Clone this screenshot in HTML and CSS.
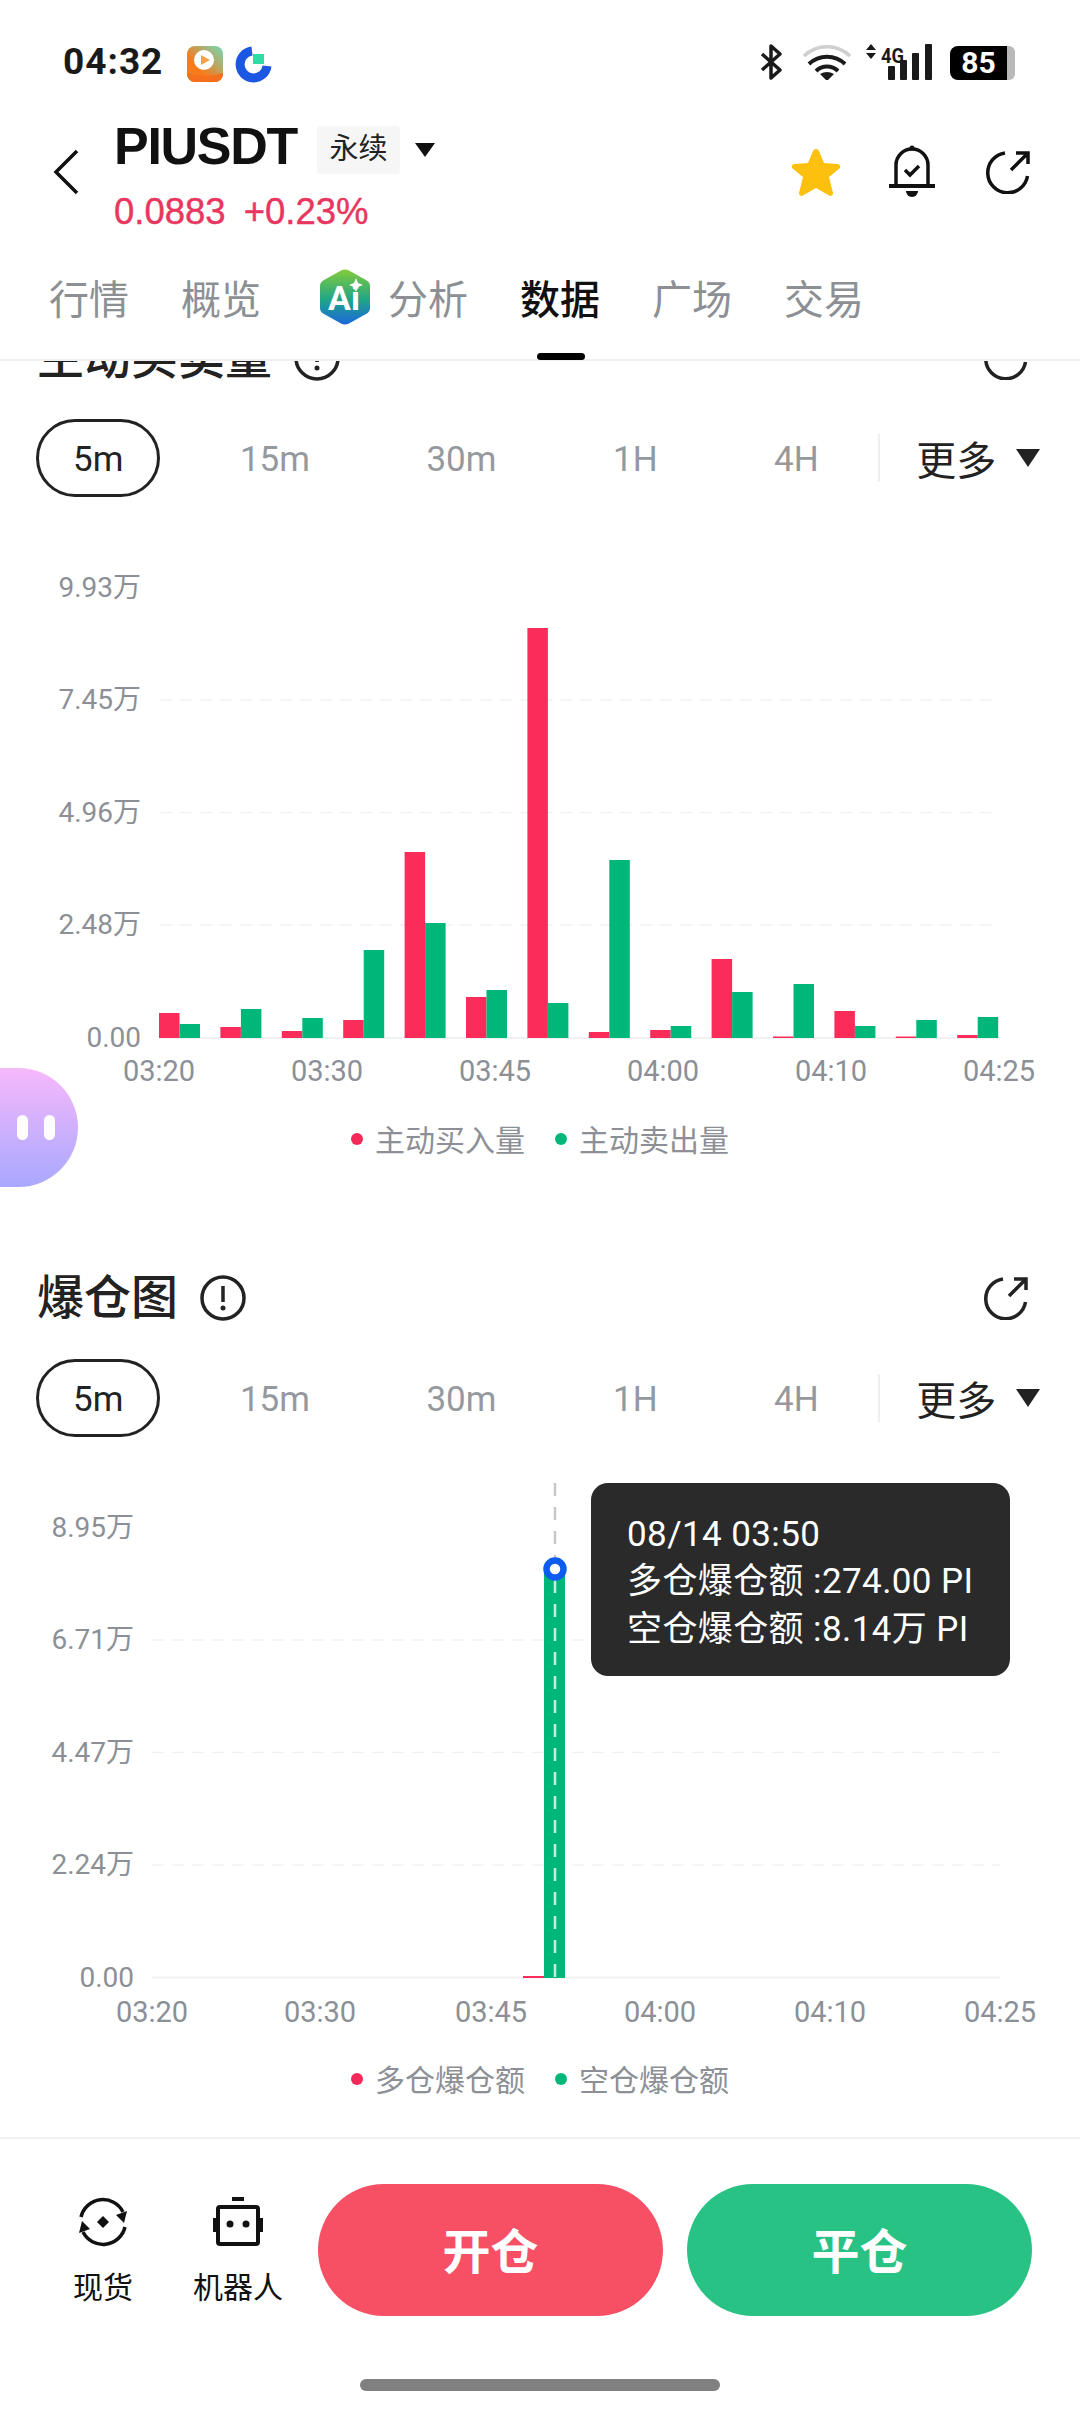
FILE: index.html
```html
<!DOCTYPE html>
<html lang="zh-CN">
<head>
    <meta charset="UTF-8">
    <meta name="viewport" content="width=device-width, initial-scale=1.0">
    <title>PIUSDT 数据</title>
    <link rel="stylesheet" href="styles.css">
</head>
<body>
    <div class="status-bar">
        <div class="status-left">
            <span class="time">04:32</span>
            <svg class="app-icon" width="36" height="36" viewBox="0 0 36 36">
                <defs>
                    <linearGradient id="appGrad" x1="0" y1="1" x2="1" y2="0">
                        <stop offset="0.35" stop-color="#f77a1c"/>
                        <stop offset="1" stop-color="#6fdcb8"/>
                    </linearGradient>
                </defs>
                <rect width="36" height="36" rx="8" fill="url(#appGrad)"/>
                <path d="M0 27 Q18 33 36 27 V28 A8 8 0 0 1 28 36 H8 A8 8 0 0 1 0 28 Z" fill="#f56f1e"/>
                <circle cx="17" cy="14" r="10" fill="#fff"/>
                <path d="M14 9 L23 14 L14 19 Z" fill="#f5a04a"/>
            </svg>
            <svg class="app-icon" width="37" height="37" viewBox="0 0 37 37">
                <path d="M17 5 A13.500 13.500 0 1 0 32 20" fill="none" stroke="#1b57e2" stroke-width="9"/>
                <rect x="18" y="8" width="11" height="10" fill="#2edca4"/>
            </svg>
        </div>
        <div class="status-right">
            <svg width="22" height="36" viewBox="0 0 22 36">
                <path d="M2 10 L20 26 L11 34 V2 L20 10 L2 26" fill="none" stroke="#1a1a1a" stroke-width="3.500" stroke-linejoin="round"/>
            </svg>
            <svg width="50" height="36" viewBox="0 0 50 36">
                <path d="M2 12 A33 33 0 0 1 48 12" fill="none" stroke="#cfcfcf" stroke-width="3.500"/>
                <path d="M7 20 A26 26 0 0 1 43 20" fill="none" stroke="#1a1a1a" stroke-width="4"/>
                <path d="M14 27 A16 16 0 0 1 36 27" fill="none" stroke="#1a1a1a" stroke-width="4"/>
                <path d="M25 37 L18 30 Q25 26 32 30 Z" fill="#1a1a1a"/>
            </svg>
            <svg width="67" height="36" viewBox="0 0 67 36">
                <path d="M0 6 L5 0 L10 6 Z M0 9 H10 L5 15 Z" fill="#1a1a1a"/>
                <text class="net-label" x="15" y="19" textLength="23" lengthAdjust="spacingAndGlyphs">4G</text>
                <rect x="22" y="22" width="7" height="14" rx="1" fill="#1a1a1a"/>
                <rect x="34" y="16" width="7" height="20" rx="1" fill="#1a1a1a"/>
                <rect x="46" y="9" width="7" height="27" rx="1" fill="#1a1a1a"/>
                <rect x="59" y="0" width="7" height="36" rx="1" fill="#1a1a1a"/>
            </svg>
            <div class="battery">
                <span class="battery-body">85</span>
                <span class="battery-tip"></span>
            </div>
        </div>
    </div>

    <header class="top">
        <div class="top-row">
            <svg class="back" width="27" height="46" viewBox="0 0 27 46">
                <path d="M25 2 L4 23 L25 44" fill="none" stroke="#111" stroke-width="3.500"/>
            </svg>
            <div class="pair">
                <div class="pair-title">
                    <span class="symbol">PIUSDT</span>
                    <span class="tag">永续</span>
                    <span class="caret"></span>
                </div>
                <div class="price">
                    <span>0.0883</span>
                    <span>+0.23%</span>
                </div>
            </div>
            <div class="top-actions">
                <svg width="50" height="49" viewBox="0 0 50 49">
                    <path d="M25 1 Q27 1 28 3 L33 15 L47 16 Q50 17 49 20 L38 29 L42 45 Q42 48 39 48 L25 40 L11 48 Q8 48 8 45 L12 29 L1 20 Q0 17 3 16 L17 15 L22 3 Q23 1 25 1 Z" fill="#fdc00f"/>
                </svg>
                <svg class="bell" width="46" height="52" viewBox="0 0 46 52">
                    <path d="M7 41 V20 A16 16 0 0 1 39 20 V41" fill="none" stroke="#111" stroke-width="3.500"/>
                    <path d="M0 41 H46" stroke="#111" stroke-width="4"/>
                    <circle cx="23" cy="3" r="2.500" fill="#111"/>
                    <path d="M17 46 H29 A6 6 0 0 1 17 46 Z" fill="#111"/>
                    <path d="M16 25 L21 30 L30 21" fill="none" stroke="#111" stroke-width="3.500"/>
                </svg>
                <svg class="top-share" width="44" height="44" viewBox="0 0 44 44">
                    <path d="M19 3 A20 20 0 1 0 41.500 26" fill="none" stroke="#111" stroke-width="3.500"/>
                    <path d="M25 20 L41 4 M30 3 H42 V14" fill="none" stroke="#111" stroke-width="3.500"/>
                </svg>
            </div>
        </div>
        <nav class="tabs">
            <span class="tab">行情</span>
            <span class="tab">概览</span>
            <span class="tab tab-ai">
                <svg width="50" height="56" viewBox="0 0 50 56">
                    <defs>
                        <linearGradient id="aiGrad" x1="0" y1="0" x2="0" y2="1">
                            <stop offset="0" stop-color="#84cc3a"/>
                            <stop offset="0.55" stop-color="#1fa587"/>
                            <stop offset="1" stop-color="#1c68dc"/>
                        </linearGradient>
                    </defs>
                    <path d="M21 1.500 Q25 -0.500 29 1.500 L46 11 Q50 13 50 17 V39 Q50 43 46 45 L29 54.500 Q25 56.500 21 54.500 L4 45 Q0 43 0 39 V17 Q0 13 4 11 Z" fill="url(#aiGrad)"/>
                    <text class="ai-label" x="24" y="41">Ai</text>
                    <path d="M36 9 L38 14 L43 16 L38 18 L36 23 L34 18 L29 16 L34 14 Z" fill="#fff"/>
                </svg>
                分析
            </span>
            <span class="tab tab-active">数据</span>
            <span class="tab">广场</span>
            <span class="tab">交易</span>
        </nav>
    </header>

    <main class="content">
        <section class="section section-clipped">
            <div class="section-head">
                <h2 class="section-title">主动买卖量</h2>
                <svg class="info" width="46" height="46" viewBox="0 0 46 46">
                    <circle cx="23" cy="23" r="21" fill="none" stroke="#222" stroke-width="3.500"/>
                    <path d="M23 11 V27" stroke="#222" stroke-width="3.500"/>
                    <circle cx="23" cy="33" r="2.500" fill="#222"/>
                </svg>
                <svg class="share" width="44" height="44" viewBox="0 0 44 44">
                    <path d="M19 3 A20 20 0 1 0 41.500 26" fill="none" stroke="#222" stroke-width="3.500"/>
                    <path d="M25 20 L41 4 M30 3 H42 V14" fill="none" stroke="#222" stroke-width="3.500"/>
                </svg>
            </div>
            <div class="ranges">
                <span class="range range-active">5m</span>
                <span class="range">15m</span>
                <span class="range">30m</span>
                <span class="range">1H</span>
                <span class="range">4H</span>
                <span class="range-more">更多<i class="more-caret"></i></span>
            </div>
            <svg class="chart" width="1080" height="700" viewBox="0 497 1080 700">
                <g class="grid">
                    <path d="M160 700 H1000 M160 812.500 H1000 M160 925 H1000"/>
                </g>
                <path class="baseline" d="M159 1038 H1000"/>
                <g class="y-labels">
                    <text x="141" y="597">9.93万</text>
                    <text x="141" y="709">7.45万</text>
                    <text x="141" y="822">4.96万</text>
                    <text x="141" y="934">2.48万</text>
                    <text x="141" y="1047">0.00</text>
                </g>
                <g class="bars-up">
                    <rect x="159" y="1013" width="20.500" height="25"/>
                    <rect x="220.400" y="1027" width="20.500" height="11"/>
                    <rect x="281.800" y="1031" width="20.500" height="7"/>
                    <rect x="343.200" y="1020" width="20.500" height="18"/>
                    <rect x="404.600" y="852" width="20.500" height="186"/>
                    <rect x="466" y="997" width="20.500" height="41"/>
                    <rect x="527.400" y="628" width="20.500" height="410"/>
                    <rect x="588.800" y="1032" width="20.500" height="6"/>
                    <rect x="650.200" y="1030" width="20.500" height="8"/>
                    <rect x="711.600" y="959" width="20.500" height="79"/>
                    <rect x="773" y="1036.500" width="20.500" height="1.500"/>
                    <rect x="834.400" y="1011" width="20.500" height="27"/>
                    <rect x="895.800" y="1036.500" width="20.500" height="1.500"/>
                    <rect x="957.200" y="1035" width="20.500" height="3"/>
                </g>
                <g class="bars-down">
                    <rect x="179.500" y="1024" width="20.500" height="14"/>
                    <rect x="240.900" y="1009" width="20.500" height="29"/>
                    <rect x="302.300" y="1018" width="20.500" height="20"/>
                    <rect x="363.700" y="950" width="20.500" height="88"/>
                    <rect x="425.100" y="923" width="20.500" height="115"/>
                    <rect x="486.500" y="990" width="20.500" height="48"/>
                    <rect x="547.900" y="1003" width="20.500" height="35"/>
                    <rect x="609.300" y="860" width="20.500" height="178"/>
                    <rect x="670.700" y="1026" width="20.500" height="12"/>
                    <rect x="732.100" y="992" width="20.500" height="46"/>
                    <rect x="793.500" y="984" width="20.500" height="54"/>
                    <rect x="854.900" y="1026" width="20.500" height="12"/>
                    <rect x="916.300" y="1020" width="20.500" height="18"/>
                    <rect x="977.700" y="1017" width="20.500" height="21"/>
                </g>
                <g class="x-labels">
                    <text x="159" y="1081">03:20</text>
                    <text x="327" y="1081">03:30</text>
                    <text x="495" y="1081">03:45</text>
                    <text x="663" y="1081">04:00</text>
                    <text x="831" y="1081">04:10</text>
                    <text x="999" y="1081">04:25</text>
                </g>
                <circle class="dot-up" cx="357" cy="1139" r="6"/>
                <text class="legend" x="375" y="1151">主动买入量</text>
                <circle class="dot-down" cx="561" cy="1139" r="6"/>
                <text class="legend" x="579" y="1151">主动卖出量</text>
            </svg>
        </section>

        <section class="section">
            <div class="section-head">
                <h2 class="section-title">爆仓图</h2>
                <svg class="info" width="46" height="46" viewBox="0 0 46 46">
                    <circle cx="23" cy="23" r="21" fill="none" stroke="#222" stroke-width="3.500"/>
                    <path d="M23 11 V27" stroke="#222" stroke-width="3.500"/>
                    <circle cx="23" cy="33" r="2.500" fill="#222"/>
                </svg>
                <svg class="share" width="44" height="44" viewBox="0 0 44 44">
                    <path d="M19 3 A20 20 0 1 0 41.500 26" fill="none" stroke="#222" stroke-width="3.500"/>
                    <path d="M25 20 L41 4 M30 3 H42 V14" fill="none" stroke="#222" stroke-width="3.500"/>
                </svg>
            </div>
            <div class="ranges">
                <span class="range range-active">5m</span>
                <span class="range">15m</span>
                <span class="range">30m</span>
                <span class="range">1H</span>
                <span class="range">4H</span>
                <span class="range-more">更多<i class="more-caret"></i></span>
            </div>
            <div class="chart-wrap">
                <svg class="chart" width="1080" height="700" viewBox="0 1437 1080 700">
                    <g class="grid">
                        <path d="M152 1640 H1000 M152 1752.500 H1000 M152 1865 H1000"/>
                    </g>
                    <path class="baseline" d="M152 1977.500 H1000"/>
                    <g class="y-labels">
                        <text x="134" y="1537">8.95万</text>
                        <text x="134" y="1649">6.71万</text>
                        <text x="134" y="1762">4.47万</text>
                        <text x="134" y="1874">2.24万</text>
                        <text x="134" y="1987">0.00</text>
                    </g>
                    <rect class="bar-up-thin" x="523" y="1976" width="21" height="2"/>
                    <rect class="bar-down-tall" x="544" y="1569" width="21" height="409"/>
                    <path class="cross-light" d="M555 1580 V1977"/>
                    <path class="cross-dark" d="M555 1483 V1558"/>
                    <circle class="cross-dot" cx="555" cy="1569" r="8.500"/>
                    <g class="x-labels">
                        <text x="152" y="2022">03:20</text>
                        <text x="320" y="2022">03:30</text>
                        <text x="491" y="2022">03:45</text>
                        <text x="660" y="2022">04:00</text>
                        <text x="830" y="2022">04:10</text>
                        <text x="1000" y="2022">04:25</text>
                    </g>
                    <circle class="dot-up" cx="357" cy="2079" r="6"/>
                    <text class="legend" x="375" y="2091">多仓爆仓额</text>
                    <circle class="dot-down" cx="561" cy="2079" r="6"/>
                    <text class="legend" x="579" y="2091">空仓爆仓额</text>
                </svg>
                <div class="tooltip">
                    <div>08/14 03:50</div>
                    <div>多仓爆仓额 :274.00 PI</div>
                    <div>空仓爆仓额 :8.14万 PI</div>
                </div>
            </div>
        </section>
    </main>

    <footer class="footer">
        <div class="footer-row">
            <div class="tool">
                <svg width="50" height="50" viewBox="0 0 50 50">
                    <path d="M3 20 A22.500 22.500 0 0 1 45 15" fill="none" stroke="#111" stroke-width="3.500"/>
                    <path d="M47 30 A22.500 22.500 0 0 1 5 35" fill="none" stroke="#111" stroke-width="3.500"/>
                    <path d="M49 14 L46 26 L38 18 Z M1 36 L4 24 L12 32 Z" fill="#111"/>
                    <path d="M25 19 L31 25 L25 31 L19 25 Z" fill="#111"/>
                </svg>
                <span class="tool-label">现货</span>
            </div>
            <div class="tool">
                <svg width="50" height="50" viewBox="0 0 50 50">
                    <rect x="19" y="0" width="12" height="4" fill="#111"/>
                    <rect x="5" y="10" width="40" height="37" rx="2" fill="none" stroke="#111" stroke-width="4"/>
                    <rect x="0" y="21" width="3" height="14" fill="#111"/>
                    <rect x="47" y="21" width="3" height="14" fill="#111"/>
                    <circle cx="17" cy="27" r="3.500" fill="#111"/>
                    <circle cx="33" cy="27" r="3.500" fill="#111"/>
                </svg>
                <span class="tool-label">机器人</span>
            </div>
            <button class="trade-btn btn-open">开仓</button>
            <button class="trade-btn btn-close">平仓</button>
        </div>
        <div class="home-bar"></div>
    </footer>

    <div class="float-bot">
        <span class="float-eye"></span>
        <span class="float-eye"></span>
    </div>
</body>
</html>
```

FILE: styles.css
```css
* {
    box-sizing: border-box;
}

body {
    position: relative;
    width: 1080px;
    height: 2412px;
    margin: 0;
    overflow: hidden;
    background: #fff;
    color: #222;
    font-family: Roboto, "Noto Sans CJK SC", sans-serif;
}

/* status bar */
.status-bar {
    display: flex;
    justify-content: space-between;
    height: 120px;
    padding: 44px 65px 0 63px;
}

.status-left {
    display: flex;
    align-items: flex-start;
}

.time {
    width: 124px;
    margin-top: -1px;
    font-size: 37px;
    line-height: 38px;
    font-weight: 700;
    letter-spacing: 1px;
    color: #1a1a1a;
}

.app-icon {
    margin-top: 2px;
    margin-right: 12px;
}

.status-right {
    display: flex;
    align-items: flex-start;
}

.status-right svg {
    margin-right: 20px;
}

.status-right svg:nth-child(2) {
    margin-right: 14px;
}

.status-right svg:nth-child(3) {
    margin-right: 17px;
}

.net-label {
    font-size: 20px;
    font-weight: 700;
    fill: #1a1a1a;
}

.battery {
    display: flex;
    margin-top: 2px;
}

.battery-body {
    width: 57px;
    height: 34px;
    background: #000;
    border-radius: 8px 0 0 8px;
    color: #fff;
    font-size: 30px;
    line-height: 34px;
    font-weight: 700;
    text-align: center;
}

.battery-tip {
    width: 8px;
    height: 34px;
    background: #b9b9b9;
    border-radius: 0 6px 6px 0;
}

/* header */
.top {
    height: 241px;
    border-bottom: 2px solid #f0f0f0;
}

.top-row {
    display: flex;
    align-items: flex-start;
    height: 130px;
    padding: 6px 50px 0 52px;
}

.back {
    margin-top: 23px;
    margin-right: 35px;
}

.pair {
    flex: 1;
}

.pair-title {
    display: flex;
    align-items: center;
    height: 48px;
}

.symbol {
    width: 203px;
    margin-bottom: 8px;
    font-family: "Liberation Sans", sans-serif;
    font-size: 52px;
    font-weight: 700;
    letter-spacing: -1.300px;
    color: #111;
}

.tag {
    width: 83px;
    height: 48px;
    background: #f6f6f6;
    border-radius: 4px;
    font-size: 29px;
    line-height: 46px;
    text-align: center;
    color: #222;
}

.caret {
    width: 0;
    height: 0;
    margin-left: 15px;
    border-left: 10px solid transparent;
    border-right: 10px solid transparent;
    border-top: 14px solid #111;
}

.price {
    display: flex;
    gap: 18px;
    margin-top: 16px;
    font-family: "Liberation Sans", sans-serif;
    font-size: 36.500px;
    line-height: 44px;
    -webkit-text-stroke: 0.4px #e9365f;
    color: #e9365f;
}

.top-actions {
    display: flex;
    align-items: center;
    gap: 48px;
    margin-top: 21px;
}

.bell {
    margin-top: -2px;
}

.top-share {
    margin-left: 3px;
}

.tabs {
    display: flex;
    align-items: flex-start;
    gap: 52px;
    height: 109px;
    padding-left: 49px;
}

.tab {
    position: relative;
    display: flex;
    align-items: center;
    gap: 18px;
    height: 118px;
    margin-top: -8px;
    padding-bottom: 9px;
    font-size: 40px;
    color: #8c9094;
}

.tab-ai {
    margin-left: 7px;
}

.tab-active {
    font-weight: 500;
    color: #111;
}

.tab-active::after {
    content: "";
    position: absolute;
    left: 17px;
    bottom: 0;
    width: 48px;
    height: 7px;
    background: #000;
    border-radius: 4px;
}

.ai-label {
    font-size: 34px;
    font-weight: 700;
    text-anchor: middle;
    fill: #fff;
}

/* scrolling content */
.content {
    height: 1776px;
    overflow: hidden;
}

.section-clipped {
    margin-top: -31px;
    margin-bottom: 73px;
}

.section-head {
    display: flex;
    align-items: center;
    height: 56px;
    padding: 0 52px 0 37px;
}

.section-title {
    margin: 0;
    font-size: 47px;
    line-height: 56px;
    font-weight: 500;
    color: #222;
}

.info {
    margin-left: 22px;
}

.share {
    margin-left: auto;
}

.ranges {
    display: flex;
    align-items: center;
    gap: 42.500px;
    height: 78px;
    margin-top: 33px;
    padding-left: 36px;
}

.range {
    padding: 4px 37px 0;
    font-size: 35px;
    line-height: 74px;
    color: #95999e;
}

.range-active {
    border: 3px solid #222;
    border-radius: 39px;
    padding: 4px 34px 0;
    line-height: 68px;
    color: #222;
}

.range-more {
    display: flex;
    align-items: center;
    margin-left: -20px;
    padding-left: 36px;
    height: 48px;
    border-left: 2px solid #eeeff1;
    font-size: 40px;
    color: #222;
    white-space: nowrap;
}

.more-caret {
    width: 0;
    height: 0;
    margin-left: 20px;
    border-left: 12px solid transparent;
    border-right: 12px solid transparent;
    border-top: 18px solid #222;
}

/* charts */
.chart-wrap {
    position: relative;
}

.chart {
    display: block;
}

.grid path {
    fill: none;
    stroke: #f1f2f4;
    stroke-width: 1.500;
    stroke-dasharray: 12 8;
}

.baseline {
    fill: none;
    stroke: #f0f1f3;
    stroke-width: 2;
}

.y-labels text {
    font-size: 28px;
    text-anchor: end;
    fill: #8c9096;
}

.x-labels text {
    font-size: 29px;
    text-anchor: middle;
    fill: #8c9096;
}

.legend {
    font-size: 30px;
    fill: #8c9096;
}

.bars-up rect,
.bar-up-thin {
    fill: #fb2c5a;
}

.bars-down rect,
.bar-down-tall {
    fill: #00b77a;
}

.dot-up {
    fill: #f5285a;
}

.dot-down {
    fill: #00b77a;
}

.cross-dark,
.cross-light {
    fill: none;
    stroke-width: 2.500;
    stroke-dasharray: 13 11;
}

.cross-dark {
    stroke: #c6c8cb;
}

.cross-light {
    stroke: #c9ecde;
}

.cross-dot {
    fill: #fff;
    stroke: #0d5cf0;
    stroke-width: 6.500;
}

.tooltip {
    position: absolute;
    left: 591px;
    top: 46px;
    display: flex;
    flex-direction: column;
    justify-content: center;
    width: 419px;
    height: 193px;
    padding: 5px 0 0 36px;
    background: #2a2a2a;
    border-radius: 17px;
    color: #fff;
    font-size: 35px;
    line-height: 47.500px;
    letter-spacing: 0.4px;
    white-space: nowrap;
}

/* bottom bar */
.footer {
    height: 275px;
    border-top: 2px solid #f1f1f1;
}

.footer-row {
    display: flex;
    align-items: flex-start;
    height: 240px;
    padding: 45px 0 0 58px;
}

.tool {
    display: flex;
    flex-direction: column;
    align-items: center;
    width: 90px;
    margin-top: 13px;
    margin-right: 45px;
}

.tool-label {
    margin-top: 20px;
    font-size: 30px;
    line-height: 42px;
    color: #111;
    white-space: nowrap;
}

.tool + .tool {
    margin-right: 35px;
}

.trade-btn {
    width: 345px;
    height: 132px;
    padding-bottom: 6px;
    border: none;
    border-radius: 66px;
    color: #fff;
    font-family: Roboto, "Noto Sans CJK SC", sans-serif;
    font-size: 48px;
    font-weight: 700;
}

.btn-open {
    background: #f75065;
}

.btn-close {
    margin-left: 24px;
    background: #29c285;
}

.home-bar {
    width: 360px;
    height: 12px;
    margin: 0 auto;
    background: #808080;
    border-radius: 6px;
}

/* floating assistant */
.float-bot {
    position: absolute;
    left: 0;
    top: 1068px;
    display: flex;
    align-items: center;
    gap: 16px;
    width: 78px;
    height: 119px;
    padding-left: 17px;
    background: linear-gradient(#f7b8fb, #a8a8ff);
    border-radius: 0 60px 60px 0;
}

.float-eye {
    width: 11px;
    height: 25px;
    background: #fff;
    border-radius: 6px;
}
```
